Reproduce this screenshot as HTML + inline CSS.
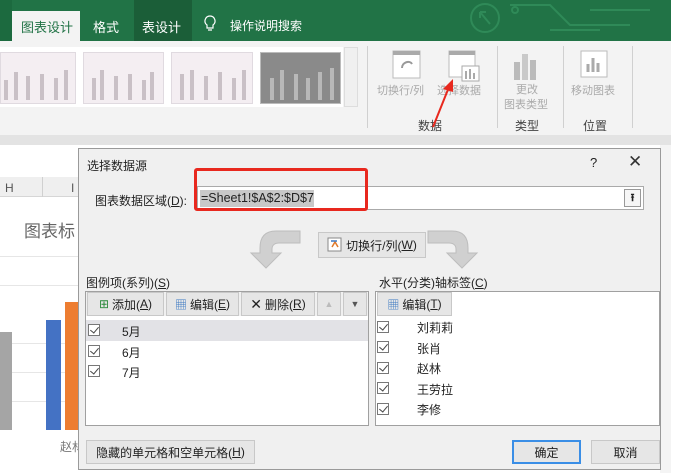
<!DOCTYPE html>
<html><head><meta charset="utf-8"><style>
*{margin:0;padding:0;box-sizing:border-box}
body{width:680px;height:473px;overflow:hidden;position:relative;background:#fff;font-family:"Liberation Sans","Noto Sans CJK SC",sans-serif;font-size:12px;color:#222}
.a{position:absolute}
.t{position:absolute;white-space:nowrap}
.btn{position:absolute;background:#e6e6e6;border:1px solid #c8c8c8;font-size:12px;display:flex;align-items:center;justify-content:center;white-space:nowrap}
.cb{position:absolute;width:12px;height:12px;border:1px solid #777;background:#fff}
.cb:after{content:"";position:absolute;left:3px;top:0px;width:4px;height:7px;border-right:1.3px solid #444;border-bottom:1.3px solid #444;transform:rotate(40deg)}
.thumb{position:absolute;top:52px;height:52px;background:#f4eef2;border:1px solid #e0dae0}
.gt{color:#aaa;font-size:11px}
</style></head><body>
<!-- ribbon -->
<div class="a" style="left:0;top:0;width:671px;height:41px;background:#217346"></div>
<div class="a" style="left:0;top:0;width:12px;height:41px;background:#1c6a3f"></div>
<div class="a" style="left:134px;top:0;width:58px;height:41px;background:#1b5e38"></div>
<svg class="a" style="left:440px;top:0" width="231" height="41"><g stroke="#2f8a58" fill="none" stroke-width="2"><circle cx="45" cy="18" r="14"/><path d="M40 12l10 12M40 12h6M40 12v6"/><path d="M70 5h40l20 20h60M110 30h50M150 10h60"/><circle cx="75" cy="10" r="3"/></g></svg>
<div class="a" style="left:12px;top:11px;width:68px;height:30px;background:#f3f3f3"></div>
<div class="t" style="left:21px;top:17px;color:#217346;font-size:13px">图表设计</div>
<div class="t" style="left:93px;top:17px;color:#fff;font-size:13px">格式</div>
<div class="t" style="left:142px;top:17px;color:#fff;font-size:13px">表设计</div>
<svg class="a" style="left:204px;top:15px" width="12" height="18"><path d="M6 1a5 5 0 0 0-3 9v3h6v-3a5 5 0 0 0-3-9zM4 15h4" stroke="#fff" fill="none" stroke-width="1.2"/></svg>
<div class="t" style="left:230px;top:17px;color:#fff;font-size:12px">操作说明搜索</div>
<div class="a" style="left:0;top:41px;width:671px;height:94px;background:#f3f3f3"></div>
<div class="a" style="left:0;top:47px;width:343px;height:60px;background:#fff"></div>
<div class="thumb" style="left:0;width:76px"></div>
<div class="thumb" style="left:83px;width:81px"></div>
<div class="thumb" style="left:171px;width:82px"></div>
<div class="thumb" style="left:260px;width:81px;background:#8a8a8a;border-color:#bbb"></div>
<svg class="a" style="left:0;top:60px" width="343" height="40"><g fill="#c9c0c6"><rect x="4" y="20" width="4" height="20"/><rect x="14" y="12" width="4" height="28"/><rect x="26" y="16" width="4" height="24"/><rect x="40" y="14" width="4" height="26"/><rect x="54" y="18" width="4" height="22"/><rect x="64" y="10" width="4" height="30"/>
<rect x="92" y="18" width="4" height="22"/><rect x="100" y="10" width="4" height="30"/><rect x="114" y="16" width="4" height="24"/><rect x="128" y="14" width="4" height="26"/><rect x="142" y="20" width="4" height="20"/><rect x="150" y="12" width="4" height="28"/>
<rect x="180" y="14" width="4" height="26"/><rect x="190" y="10" width="4" height="30"/><rect x="204" y="16" width="4" height="24"/><rect x="218" y="12" width="4" height="28"/><rect x="232" y="18" width="4" height="22"/><rect x="242" y="10" width="4" height="30"/></g>
<g fill="#b8b8b8"><rect x="270" y="18" width="4" height="22"/><rect x="280" y="10" width="4" height="30"/><rect x="294" y="14" width="4" height="26"/><rect x="306" y="18" width="4" height="22"/><rect x="318" y="12" width="4" height="28"/><rect x="330" y="8" width="4" height="32"/></g></svg>
<div class="a" style="left:344px;top:47px;width:14px;height:60px;background:#f0f0f0;border:1px solid #ddd"></div>
<div class="a" style="left:367px;top:46px;width:1px;height:82px;background:#d0d0d0"></div>
<div class="a" style="left:497px;top:46px;width:1px;height:82px;background:#d0d0d0"></div>
<div class="a" style="left:563px;top:46px;width:1px;height:82px;background:#d0d0d0"></div>
<div class="a" style="left:632px;top:46px;width:1px;height:82px;background:#d0d0d0"></div>
<svg class="a" style="left:392px;top:50px" width="30" height="30"><rect x="1" y="1" width="27" height="27" fill="#fff" stroke="#bbb"/><rect x="1" y="1" width="27" height="4" fill="#aaa"/><path d="M10 18c0-6 8-8 10-4" stroke="#999" fill="none" stroke-width="2"/></svg>
<svg class="a" style="left:448px;top:50px" width="34" height="34"><rect x="1" y="1" width="26" height="26" fill="#fff" stroke="#bbb"/><rect x="1" y="1" width="26" height="4" fill="#aaa"/><rect x="14" y="16" width="17" height="15" fill="#fff" stroke="#aaa"/><path d="M18 29v-8M22 29v-10M26 29v-6" stroke="#aaa" stroke-width="2"/></svg>
<svg class="a" style="left:512px;top:52px" width="28" height="28"><rect x="2" y="10" width="6" height="18" fill="#bbb"/><rect x="10" y="2" width="6" height="26" fill="#c9c9c9"/><rect x="18" y="8" width="6" height="20" fill="#bbb"/></svg>
<svg class="a" style="left:580px;top:50px" width="30" height="32"><rect x="1" y="1" width="26" height="26" fill="#fff" stroke="#bbb"/><path d="M8 22v-8M13 22v-14M18 22v-9" stroke="#aaa" stroke-width="3"/></svg>
<div class="t gt" style="left:377px;top:82px">切换行/列</div>
<div class="t gt" style="left:437px;top:82px">选择数据</div>
<div class="t gt" style="left:516px;top:81px">更改</div>
<div class="t gt" style="left:504px;top:96px">图表类型</div>
<div class="t gt" style="left:571px;top:82px">移动图表</div>
<div class="t" style="left:418px;top:117px;font-size:12px;color:#444">数据</div>
<div class="t" style="left:515px;top:117px;font-size:12px;color:#444">类型</div>
<div class="t" style="left:583px;top:117px;font-size:12px;color:#444">位置</div>
<svg class="a" style="left:425px;top:75px" width="30" height="60"><path d="M8 52L24 12" stroke="#e8281e" stroke-width="2"/><path d="M28 4l-10 10l10 3z" fill="#e8281e"/></svg>
<div class="a" style="left:0;top:135px;width:671px;height:10px;background:#e3e3e3"></div>
<!-- sheet -->
<div class="a" style="left:0;top:177px;width:78px;height:20px;background:#efefef;border-bottom:1px solid #d6d6d6"></div>
<div class="a" style="left:42px;top:177px;width:1px;height:20px;background:#d0d0d0"></div>
<div class="t" style="left:5px;top:181px;color:#555">H</div>
<div class="t" style="left:71px;top:181px;color:#555">I</div>
<div class="t" style="left:24px;top:217px;font-size:17px;color:#666">图表标</div>
<div class="a" style="left:0;top:256px;width:78px;height:1px;background:#e6e6e6"></div>
<div class="a" style="left:0;top:285px;width:78px;height:1px;background:#e6e6e6"></div>
<div class="a" style="left:0;top:343px;width:78px;height:1px;background:#e6e6e6"></div>
<div class="a" style="left:0;top:372px;width:78px;height:1px;background:#e6e6e6"></div>
<div class="a" style="left:0;top:401px;width:78px;height:1px;background:#e6e6e6"></div>
<div class="a" style="left:0;top:332px;width:12px;height:98px;background:#a5a5a5"></div>
<div class="a" style="left:46px;top:320px;width:15px;height:110px;background:#4472c4"></div>
<div class="a" style="left:65px;top:302px;width:14px;height:128px;background:#ed7d31"></div>
<div class="t" style="left:60px;top:438px;color:#777">赵林</div>
<div class="a" style="left:660px;top:145px;width:11px;height:328px;background:#f4f4f4"></div>
<div class="a" style="left:671px;top:0;width:9px;height:473px;background:#fff"></div>
<!-- dialog -->
<div class="a" style="left:78px;top:148px;width:583px;height:322px;background:#f0f0f0;border:1px solid #9a9a9a"></div>
<div class="t" style="left:87px;top:157px;font-size:12px">选择数据源</div>
<div class="t" style="left:590px;top:155px;font-size:13px">?</div>
<div class="t" style="left:628px;top:152px;font-size:17px;color:#333">✕</div>
<div class="t" style="left:95px;top:192px">图表数据区域(<u>D</u>):</div>
<div class="a" style="left:197px;top:186px;width:447px;height:24px;background:#fff;border:1px solid #aaa"></div>
<div class="a" style="left:200px;top:190px;width:114px;height:17px;background:#c8c8c8"></div>
<div class="t" style="left:201px;top:191px;font-size:12.5px">=Sheet1!$A$2:$D$7</div>
<div class="a" style="left:624px;top:189px;width:17px;height:18px;border:1px solid #999;background:#f6f6f6;text-align:center;font-size:11px;font-weight:bold;line-height:16px">⭱</div>
<div class="a" style="left:194px;top:168px;width:174px;height:43px;border:3px solid #e8281e;border-radius:3px"></div>
<svg class="a" style="left:248px;top:228px" width="250" height="42"><g fill="#d0d0d0" stroke="#bdbdbd"><path d="M52 3H28C16 3 12 10 12 20v5H3l15 15l15-15h-9v-4c0-4 3-6 7-6h21z"/><path d="M180 3h24c12 0 16 7 16 17v5h9l-15 15l-15-15h9v-4c0-4-3-6-7-6h-21z"/></g></svg>
<div class="btn" style="left:318px;top:232px;width:108px;height:26px;background:#e6e6e6">
<svg width="16" height="16" style="margin-right:3px"><rect x="1" y="1" width="13" height="13" fill="#fff" stroke="#888"/><path d="M5 10l3-5 3 5" stroke="#e07a2b" fill="none" stroke-width="1.5"/><path d="M4 4h6" stroke="#3a78c2" stroke-width="1.5"/></svg>切换行/列(<u>W</u>)</div>
<div class="t" style="left:86px;top:274px">图例项(系列)(<u>S</u>)</div>
<div class="a" style="left:85px;top:291px;width:284px;height:135px;background:#fff;border:1px solid #a0a0a0"></div>
<div class="a" style="left:86px;top:292px;width:282px;height:24px;background:#f0f0f0"></div>
<div class="btn" style="left:87px;top:292px;width:77px;height:24px"><span style="color:#2a8a3a;margin-right:3px">⊞</span>添加(<u>A</u>)</div>
<div class="btn" style="left:166px;top:292px;width:73px;height:24px"><span style="color:#3a78c2;margin-right:3px">▦</span>编辑(<u>E</u>)</div>
<div class="btn" style="left:241px;top:292px;width:74px;height:24px"><span style="font-size:14px;margin-right:3px">✕</span>删除(<u>R</u>)</div>
<div class="btn" style="left:317px;top:292px;width:24px;height:24px;color:#bbb;font-size:9px">▲</div>
<div class="btn" style="left:343px;top:292px;width:24px;height:24px;color:#555;font-size:9px">▼</div>
<div class="a" style="left:86px;top:320px;width:282px;height:21px;background:#e2e2e6"></div>
<div class="cb" style="left:88px;top:324px"></div><div class="t" style="left:122px;top:323px">5月</div>
<div class="cb" style="left:88px;top:345px"></div><div class="t" style="left:122px;top:344px">6月</div>
<div class="cb" style="left:88px;top:365px"></div><div class="t" style="left:122px;top:364px">7月</div>
<div class="t" style="left:379px;top:274px">水平(分类)轴标签(<u>C</u>)</div>
<div class="a" style="left:375px;top:291px;width:285px;height:135px;background:#fff;border:1px solid #a0a0a0"></div>
<div class="btn" style="left:377px;top:292px;width:75px;height:24px"><span style="color:#3a78c2;margin-right:3px">▦</span>编辑(<u>T</u>)</div>
<div class="cb" style="left:377px;top:321px"></div><div class="t" style="left:417px;top:319px">刘莉莉</div>
<div class="cb" style="left:377px;top:341px"></div><div class="t" style="left:417px;top:340px">张肖</div>
<div class="cb" style="left:377px;top:362px"></div><div class="t" style="left:417px;top:360px">赵林</div>
<div class="cb" style="left:377px;top:382px"></div><div class="t" style="left:417px;top:381px">王劳拉</div>
<div class="cb" style="left:377px;top:403px"></div><div class="t" style="left:417px;top:401px">李修</div>
<div class="btn" style="left:86px;top:440px;width:169px;height:24px">隐藏的单元格和空单元格(<u>H</u>)</div>
<div class="btn" style="left:512px;top:440px;width:69px;height:24px;border:2px solid #3a8ee6">确定</div>
<div class="btn" style="left:591px;top:440px;width:69px;height:24px">取消</div>
</body></html>
